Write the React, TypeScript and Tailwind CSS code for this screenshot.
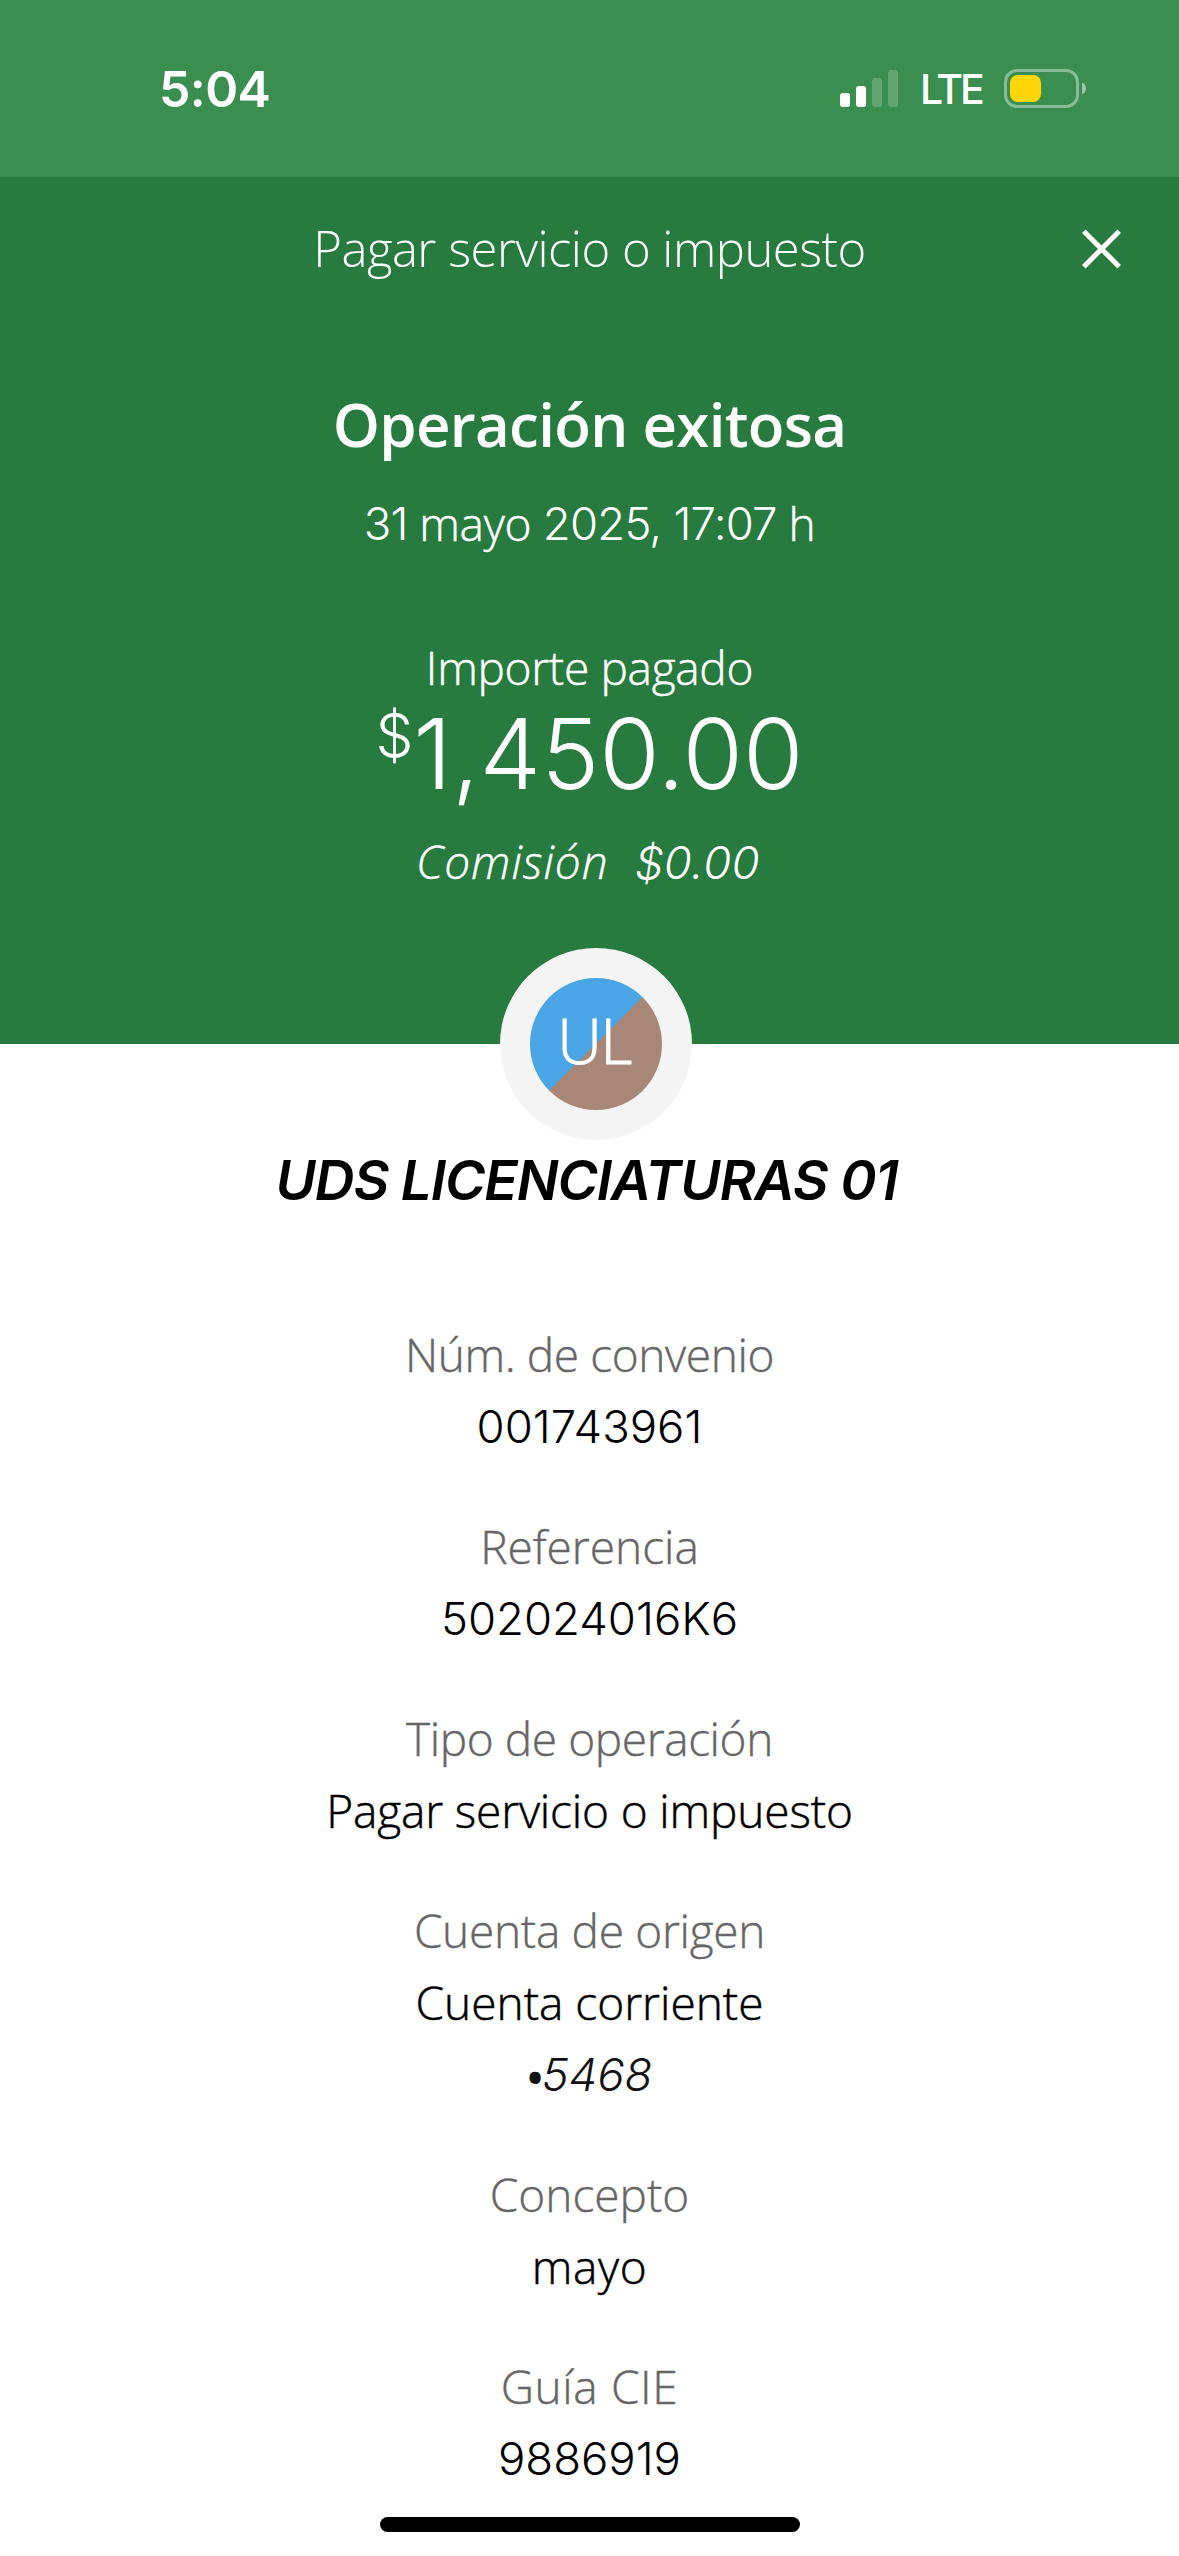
import type { ReactNode } from "react";

type DetailItem = {
  label: string;
  labelClass?: string;
  value: ReactNode;
  valueClass?: string;
  extra?: ReactNode;
};

// Figures use a font with wider, rounder digits than the body text.
function Num({ children, className = "" }: { children: ReactNode; className?: string }) {
  return (
    <span
      className={`align-[1px] font-['Inter',sans-serif] text-[45.5px] leading-none [-webkit-text-stroke:0px] ${className}`}
    >
      {children}
    </span>
  );
}

const details: DetailItem[] = [
  {
    label: "Núm. de convenio",
    labelClass: "tracking-[-0.4px]",
    value: <Num>001743961</Num>,
  },
  { label: "Referencia", value: <Num>502024016K6</Num> },
  {
    label: "Tipo de operación",
    labelClass: "tracking-[-0.4px]",
    value: "Pagar servicio o impuesto",
    valueClass: "tracking-[-0.15px]",
  },
  {
    label: "Cuenta de origen",
    labelClass: "tracking-[-0.3px]",
    value: "Cuenta corriente",
    extra: (
      <>
        <span className="text-[40px] leading-none font-bold">•</span>
        <Num>5468</Num>
      </>
    ),
  },
  { label: "Concepto", value: "mayo", valueClass: "tracking-[0.6px]" },
  { label: "Guía CIE", labelClass: "tracking-[0.6px]", value: <Num>9886919</Num> },
];

function SignalIcon() {
  return (
    <svg width="58" height="37" viewBox="0 0 58 37" fill="white">
      <rect x="0" y="23" width="10" height="14" rx="3" />
      <rect x="16" y="16" width="10" height="21" rx="3" />
      <rect x="32" y="8" width="10" height="29" rx="3" opacity="0.2" />
      <rect x="48" y="0" width="10" height="37" rx="3" opacity="0.2" />
    </svg>
  );
}

function BatteryIcon() {
  return (
    <svg width="82" height="39" viewBox="0 0 82 39" fill="none">
      <rect
        x="1.5"
        y="1.5"
        width="72"
        height="36"
        rx="11.5"
        stroke="white"
        strokeOpacity="0.4"
        strokeWidth="3"
      />
      <rect x="6" y="6" width="31" height="27" rx="8" fill="#ffd60a" />
      <path d="M78 13.5c2.5 1 4 3.200 4 6s-1.500 5-4 6z" fill="white" fillOpacity="0.5" />
    </svg>
  );
}

function StatusBar() {
  return (
    <div className="flex h-[177px] items-center justify-between bg-[#3a8f50] pr-[93px] pl-[159px] font-['Inter',sans-serif] text-white">
      <span className="text-[50px] leading-none font-semibold tracking-[-0.6px]">5:04</span>
      <div className="flex items-center">
        <SignalIcon />
        <span className="mt-[2px] ml-[22px] w-[84px] text-[41px] leading-none font-medium tracking-[-3px]">
          LTE
        </span>
        <BatteryIcon />
      </div>
    </div>
  );
}

function Avatar() {
  return (
    <div className="relative z-10 -mt-24 ml-[13px] flex size-48 items-center justify-center rounded-full bg-[#f4f4f4]">
      <div className="flex size-[132px] items-center justify-center rounded-full bg-[linear-gradient(135deg,#49a5e6_50%,#a98778_50%)] pr-[4px] pb-[8px]">
        <span className="text-[62px] leading-none font-light tracking-[-1.5px] text-white [-webkit-text-stroke:1px]">
          UL
        </span>
      </div>
    </div>
  );
}

function Detail({ label, labelClass = "", value, valueClass = "", extra }: DetailItem) {
  return (
    <div className="text-center text-[46px] leading-[72px] font-light">
      <p className={`text-[#666666] [-webkit-text-stroke:0.4px] ${labelClass}`}>{label}</p>
      <p className={`text-black [-webkit-text-stroke:0.5px] ${valueClass}`}>{value}</p>
      {extra ? <p className="text-[#121212] italic">{extra}</p> : null}
    </div>
  );
}

export default function App() {
  return (
    <div className="relative h-[2556px] w-[1179px] overflow-hidden bg-white font-['Open_Sans',sans-serif]">
      <StatusBar />

      <header className="flex h-[867px] flex-col items-center bg-[#277b3f] text-white">
        <div className="grid h-[140px] w-full grid-cols-[1fr_auto_1fr] items-center">
          <h1 className="col-start-2 pt-[2px] text-[49px] leading-none font-light tracking-[-0.5px]">
            Pagar servicio o impuesto
          </h1>
          <button type="button" aria-label="Cerrar" className="mt-[3px] mr-[58px] justify-self-end">
            <svg width="39" height="40" viewBox="0 0 39 40" stroke="white" strokeWidth="5">
              <path d="M1.800 2.300l35.400 35.400M37.200 2.300L1.800 37.700" />
            </svg>
          </button>
        </div>

        <h2 className="mt-[67px] text-[60px] leading-[80px] font-semibold tracking-[-0.7px]">
          Operación exitosa
        </h2>
        <p className="mt-[23px] text-[46px] leading-[72px] font-light tracking-[-0.3px] [-webkit-text-stroke:0.5px]">
          <Num className="tracking-[-0.8px]">31</Num> mayo{" "}
          <Num className="tracking-[-0.8px]">2025, 17:07</Num> h
        </p>

        <p className="mt-[72px] text-[46px] leading-[72px] font-light tracking-[-0.3px] [-webkit-text-stroke:0.5px]">
          Importe pagado
        </p>
        <p className="flex items-start pt-[2px] font-['Inter',sans-serif] font-light">
          <span className="text-[60px] leading-[60px]">$</span>
          <span className="text-[98px] leading-[98px]">1,450.00</span>
        </p>
        <p className="mt-[22px] mr-[3px] flex items-baseline gap-[26px] text-[46px] leading-[72px] font-light italic [-webkit-text-stroke:0.4px]">
          <span className="tracking-[1px]">Comisión</span>
          <Num className="tracking-[0.4px]">$0.00</Num>
        </p>
      </header>

      <main className="flex flex-col items-center">
        <Avatar />
        <h3 className="mt-[2px] mr-[6px] font-['Inter',sans-serif] text-[55px] leading-[76px] font-semibold tracking-[-1.1px] text-black italic">
          UDS LICENCIATURAS 01
        </h3>
        <div className="mt-[100px] flex flex-col gap-12">
          {details.map((item) => (
            <Detail key={item.label} {...item} />
          ))}
        </div>
      </main>

      <div className="absolute bottom-6 left-[380px] h-[15px] w-[420px] rounded-full bg-black" />
    </div>
  );
}
